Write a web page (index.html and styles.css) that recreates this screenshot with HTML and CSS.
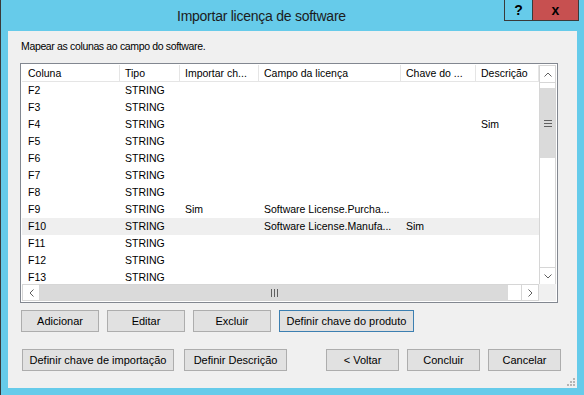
FILE: index.html
```html
<!DOCTYPE html>
<html lang="pt">
<head>
    <meta charset="UTF-8">
    <title>Importar licença de software</title>
    <link rel="stylesheet" href="styles.css">
</head>
<body>
    <div class="window">
        <div class="titlebar">
            <div class="title">Importar licença de software</div>
            <div class="caption-buttons">
                <div class="cap-btn help">?</div>
                <div class="cap-btn close">x</div>
            </div>
        </div>
        <div class="panel">
            <div class="hint">Mapear as colunas ao campo do software.</div>
            <div class="list">
                <div class="list-main">
                    <div class="grid-area">
                        <div class="row header">
                            <span>Coluna</span><span>Tipo</span><span>Importar ch...</span><span>Campo da licença</span><span>Chave do ...</span><span>Descrição</span>
                        </div>
                        <div class="row"><span>F2</span><span>STRING</span><span></span><span></span><span></span><span></span></div>
                        <div class="row"><span>F3</span><span>STRING</span><span></span><span></span><span></span><span></span></div>
                        <div class="row"><span>F4</span><span>STRING</span><span></span><span></span><span></span><span>Sim</span></div>
                        <div class="row"><span>F5</span><span>STRING</span><span></span><span></span><span></span><span></span></div>
                        <div class="row"><span>F6</span><span>STRING</span><span></span><span></span><span></span><span></span></div>
                        <div class="row"><span>F7</span><span>STRING</span><span></span><span></span><span></span><span></span></div>
                        <div class="row"><span>F8</span><span>STRING</span><span></span><span></span><span></span><span></span></div>
                        <div class="row"><span>F9</span><span>STRING</span><span>Sim</span><span>Software License.Purcha...</span><span></span><span></span></div>
                        <div class="row selected"><span>F10</span><span>STRING</span><span></span><span>Software License.Manufa...</span><span>Sim</span><span></span></div>
                        <div class="row"><span>F11</span><span>STRING</span><span></span><span></span><span></span><span></span></div>
                        <div class="row"><span>F12</span><span>STRING</span><span></span><span></span><span></span><span></span></div>
                        <div class="row"><span>F13</span><span>STRING</span><span></span><span></span><span></span><span></span></div>
                    </div>
                    <div class="vscroll">
                        <div class="sb-btn up">
                            <svg width="8" height="5" viewBox="0 0 8 5"><polyline points="0.5,4.5 4,1 7.5,4.5" fill="none" stroke="#606060" stroke-width="1"/></svg>
                        </div>
                        <div class="vtrack">
                            <div class="vthumb">
                                <svg width="8" height="7" viewBox="0 0 8 7"><path d="M0 0.5H8M0 3.5H8M0 6.5H8" stroke="#606060" stroke-width="1"/></svg>
                            </div>
                        </div>
                        <div class="sb-btn down">
                            <svg width="8" height="5" viewBox="0 0 8 5"><polyline points="0.5,0.5 4,4 7.5,0.5" fill="none" stroke="#606060" stroke-width="1"/></svg>
                        </div>
                    </div>
                </div>
                <div class="hscroll-row">
                    <div class="hscroll">
                        <div class="sb-btn left">
                            <svg width="5" height="8" viewBox="0 0 5 8"><polyline points="4.5,0.5 1,4 4.5,7.5" fill="none" stroke="#606060" stroke-width="1"/></svg>
                        </div>
                        <div class="hthumb">
                            <svg width="7" height="8" viewBox="0 0 7 8"><path d="M0.5 0V8M3.5 0V8M6.5 0V8" stroke="#606060" stroke-width="1"/></svg>
                        </div>
                        <div class="htrack"></div>
                        <div class="sb-btn right">
                            <svg width="5" height="8" viewBox="0 0 5 8"><polyline points="0.5,0.5 4,4 0.5,7.5" fill="none" stroke="#606060" stroke-width="1"/></svg>
                        </div>
                    </div>
                    <div class="corner"></div>
                </div>
            </div>
            <div class="buttons top">
                <button class="btn w78">Adicionar</button>
                <button class="btn w78">Editar</button>
                <button class="btn w78">Excluir</button>
                <button class="btn focused">Definir chave do produto</button>
            </div>
            <div class="buttons bottom">
                <button class="btn import-key">Definir chave de importação</button>
                <button class="btn desc">Definir Descrição</button>
                <button class="btn w73 push">&lt; Voltar</button>
                <button class="btn w73">Concluir</button>
                <button class="btn w73">Cancelar</button>
            </div>
            <svg class="grip" width="9" height="9" viewBox="0 0 9 9">
                <rect x="7" y="1" width="2" height="2" fill="#b5b5b5"/>
                <rect x="4" y="4" width="2" height="2" fill="#b5b5b5"/>
                <rect x="7" y="4" width="2" height="2" fill="#b5b5b5"/>
                <rect x="1" y="7" width="2" height="2" fill="#b5b5b5"/>
                <rect x="4" y="7" width="2" height="2" fill="#b5b5b5"/>
                <rect x="7" y="7" width="2" height="2" fill="#b5b5b5"/>
            </svg>
        </div>
    </div>
</body>
</html>
```

FILE: styles.css
```css
body {
    margin: 0;
    font-family: "Liberation Sans", Arial, sans-serif;
    color: #000;
}
.window {
    width: 584px;
    height: 395px;
    box-sizing: border-box;
    background: #66cbea;
    border-left: 1px solid #3a3a3a;
    display: flex;
    flex-direction: column;
}
.titlebar {
    height: 31px;
    display: flex;
    flex-shrink: 0;
}
.title {
    flex: 1;
    padding: 8px 0 0 176px;
    font-size: 14px;
    line-height: 16px;
    letter-spacing: -0.25px;
    color: #1c1c1c;
}
.caption-buttons {
    display: flex;
    align-self: flex-start;
    margin-right: 5px;
}
.cap-btn {
    height: 21px;
    box-sizing: border-box;
    border-left: 1px solid #3a3a3a;
    border-bottom: 1px solid #3a3a3a;
    font-weight: bold;
    font-size: 14px;
    line-height: 20px;
    text-align: center;
}
.help {
    width: 28px;
}
.close {
    width: 47px;
    background: #c75050;
    border-right: 1px solid #3a3a3a;
}
.panel {
    position: relative;
    flex: 1;
    margin: 0 7px 7px 7px;
    padding: 0 16px 0 12px;
    background: #f0f0f0;
    display: flex;
    flex-direction: column;
}
.hint {
    margin: 9px 0 0 1px;
    font-size: 10.5px;
    line-height: 12px;
    letter-spacing: -0.35px;
}
.list {
    margin-top: 11px;
    width: 538px;
    height: 240px;
    box-sizing: border-box;
    border: 1px solid #828790;
    padding: 1px;
    background: #fff;
    display: flex;
    flex-direction: column;
}
.list-main {
    height: 219px;
    display: flex;
}
.grid-area {
    flex: 1;
    overflow: hidden;
}
.row {
    display: grid;
    grid-template-columns: 98px 60px 79px 142px 75px 63px;
    height: 17px;
    font-size: 10.5px;
    line-height: 17px;
}
.row span {
    padding-left: 5px;
    white-space: nowrap;
    overflow: hidden;
}
.row span:first-child {
    padding-left: 6px;
}
.row.header {
    box-sizing: border-box;
    border-bottom: 1px solid #e5e5e5;
    line-height: 16px;
}
.row.header span {
    box-sizing: border-box;
    border-right: 1px solid #e5e5e5;
}
.row.selected {
    background: #efefef;
}
.vscroll {
    width: 17px;
    box-sizing: border-box;
    border: 1px solid #d6d6d6;
    border-bottom: none;
    display: flex;
    flex-direction: column;
}
.sb-btn {
    display: flex;
    align-items: center;
    justify-content: center;
    background: #fff;
}
.sb-btn.up {
    height: 16px;
    border-bottom: 1px solid #d6d6d6;
}
.sb-btn.down {
    height: 16px;
    border-top: 1px solid #d6d6d6;
}
.vtrack {
    flex: 1;
    padding-top: 5px;
}
.vthumb {
    height: 70px;
    background: #dadada;
    display: flex;
    align-items: center;
    justify-content: center;
}
.hscroll-row {
    height: 17px;
    display: flex;
}
.hscroll {
    width: 517px;
    box-sizing: border-box;
    border: 1px solid #d6d6d6;
    display: flex;
}
.sb-btn.left {
    width: 16px;
    border-right: 1px solid #d6d6d6;
}
.sb-btn.right {
    width: 16px;
    border-left: 1px solid #d6d6d6;
}
.hthumb {
    width: 468px;
    background: #dadada;
    display: flex;
    align-items: center;
    justify-content: center;
}
.htrack {
    flex: 1;
}
.corner {
    width: 17px;
    background: #f0f0f0;
}
.buttons {
    display: flex;
}
.buttons.top {
    margin: 7px 0 0 1px;
    gap: 8px;
}
.buttons.bottom {
    margin: 17px 0 0 2px;
}
.btn {
    height: 22px;
    padding: 0;
    box-sizing: border-box;
    background: #e1e1e1;
    border: 1px solid #adadad;
    border-radius: 0;
    font-family: "Liberation Sans", Arial, sans-serif;
    font-size: 11px;
    color: #000;
}
.w78 {
    width: 78px;
}
.focused {
    width: 135px;
    border-color: #3c7fb1;
}
.import-key {
    width: 152px;
}
.desc {
    width: 103px;
    margin-left: 10px;
}
.w73 {
    width: 73px;
    margin-left: 8px;
}
.w73.push {
    margin-left: auto;
}
.grip {
    position: absolute;
    right: 2px;
    bottom: 2px;
}
```
